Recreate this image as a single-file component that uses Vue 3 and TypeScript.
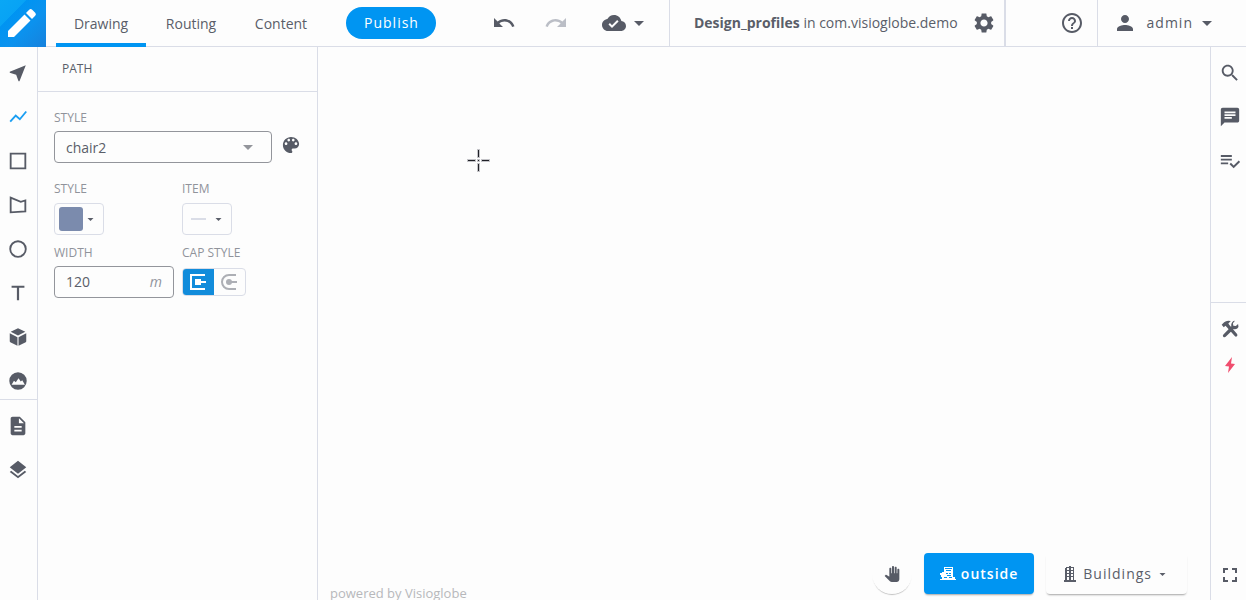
<script setup lang="ts">
import { ref } from 'vue'

interface Tool {
  name: string
  fill?: string
  stroke?: string
}

const tabs = ['Drawing', 'Routing', 'Content']
const activeTab = ref('Drawing')
const activeTool = ref('Path')
const profile = ref('chair2')
const width = ref('120')
const cap = ref<'square' | 'round'>('square')

const drawTools: Tool[] = [
  { name: 'Select', fill: 'M20.5 3.5L3 10.6v1l7 2.4 2.6 7h1z' },
  { name: 'Path', stroke: 'M3.5 17L9.5 10.5l4.5 4L21 6' },
  { name: 'Rectangle', stroke: 'M4 4h16v16H4z' },
  { name: 'Polygon', stroke: 'M4 4l11 4.5 5-1.5v12L4 20z' },
  { name: 'Circle', stroke: 'M12 3.5a8.5 8.5 0 1 0 0 17a8.5 8.5 0 1 0 0-17z' },
  { name: 'Text', fill: 'M5 4v2.4h5.8V20h2.4V6.4H19V4z' },
  { name: 'Volume', fill: 'M12 2.5L20 6.4l-8 4-8-4zM3 8l8.4 4.2v9.3L3.6 17.6Q3 17.3 3 16.6zM21 8l-8.4 4.2v9.3l7.8-3.9q.6-.3.6-1z' },
  { name: 'Image', fill: 'M12 2.5a9.5 9.5 0 1 0 0 19a9.5 9.5 0 1 0 0-19zM5 16l2.6-4.2 2 1.6 3-4.4 2.4 3.6 1.6-1.4L19.5 16z' },
]

const dataTools: Tool[] = [
  { name: 'Documents', fill: 'M14 2H6c-1.1 0-2 .9-2 2v16c0 1.1.9 2 2 2h12c1.1 0 2-.9 2-2V8l-6-6zm2 16H8v-2h8v2zm0-4H8v-2h8v2zm-3-5V3.5L18.5 9H13z' },
  { name: 'Layers', fill: 'M11.99 18.54l-7.37-5.73L3 14.07l9 7 9-7-1.63-1.27-7.38 5.74zM12 16l7.36-5.73L21 9l-9-7-9 7 1.63 1.27L12 16z' },
]

const sideTools: Tool[] = [
  { name: 'Search', fill: 'M15.5 14h-.79l-.28-.27C15.41 12.59 16 11.11 16 9.5 16 5.91 13.09 3 9.5 3S3 5.91 3 9.5 5.91 16 9.5 16c1.61 0 3.09-.59 4.23-1.57l.27.28v.79l5 4.99L20.49 19l-4.99-5zm-6 0C7.01 14 5 11.99 5 9.5S7.01 5 9.5 5 14 7.01 14 9.5 11.99 14 9.5 14z' },
  { name: 'Comments', fill: 'M20 2H4c-1.1 0-2 .9-2 2v18l4-4h14c1.1 0 2-.9 2-2V4c0-1.1-.9-2-2-2zM6 9h12v2H6V9zm8 5H6v-2h8v2zm4-6H6V6h12v2z' },
  { name: 'Checks', fill: 'M14 9.5H2v2h12v-2zm0-4H2v2h12v-2zM2 15.5h8v-2H2v2zm19.5-4L23 13l-6.99 7-4.51-4.5L13 14l3.01 3 5.49-5.5z' },
]

const icons = {
  undo: 'M12.5 8c-2.65 0-5.05.99-6.9 2.6L2 7v9h9l-3.62-3.62c1.39-1.16 3.16-1.88 5.12-1.88 3.54 0 6.55 2.31 7.6 5.5l2.37-.78C21.08 11.03 17.15 8 12.5 8z',
  cloud: 'M19.35 10.04C18.67 6.59 15.64 4 12 4 9.11 4 6.6 5.64 5.35 8.04 2.34 8.36 0 10.91 0 14c0 3.31 2.69 6 6 6h13c2.76 0 5-2.24 5-5 0-2.64-2.05-4.78-4.65-4.96zM10 17l-3.5-3.5 1.41-1.41L10 14.17 15.18 9l1.41 1.41L10 17z',
  gear: 'M19.14 12.94c.04-.3.06-.61.06-.94 0-.32-.02-.64-.07-.94l2.03-1.58c.18-.14.23-.41.12-.61l-1.92-3.32c-.12-.22-.37-.29-.59-.22l-2.39.96c-.5-.38-1.03-.7-1.62-.94l-.36-2.54c-.04-.24-.24-.41-.48-.41h-3.84c-.24 0-.43.17-.47.41l-.36 2.54c-.59.24-1.13.57-1.62.94l-2.39-.96c-.22-.08-.47 0-.59.22L2.74 8.87c-.12.21-.08.47.12.61l2.03 1.58c-.05.3-.09.63-.09.94s.02.64.07.94l-2.03 1.58c-.18.14-.23.41-.12.61l1.92 3.32c.12.22.37.29.59.22l2.39-.96c.5.38 1.03.7 1.62.94l.36 2.54c.05.24.24.41.48.41h3.84c.24 0 .44-.17.47-.41l.36-2.54c.59-.24 1.13-.56 1.62-.94l2.39.96c.22.08.47 0 .59-.22l1.92-3.32c.12-.22.07-.47-.12-.61l-2.01-1.58zM12 15.6c-1.98 0-3.6-1.62-3.6-3.6s1.62-3.6 3.6-3.6 3.6 1.62 3.6 3.6-1.62 3.6-3.6 3.6z',
  help: 'M11 18h2v-2h-2v2zm1-16C6.48 2 2 6.48 2 12s4.48 10 10 10 10-4.48 10-10S17.52 2 12 2zm0 18c-4.41 0-8-3.59-8-8s3.59-8 8-8 8 3.59 8 8-3.59 8-8 8zm0-14c-2.21 0-4 1.79-4 4h2c0-1.1.9-2 2-2s2 .9 2 2c0 2-3 1.75-3 5h2c0-2.25 3-2.5 3-5 0-2.21-1.79-4-4-4z',
  person: 'M12 12c2.21 0 4-1.79 4-4s-1.79-4-4-4-4 1.79-4 4 1.79 4 4 4zm0 2c-2.67 0-8 1.34-8 4v2h16v-2c0-2.66-5.33-4-8-4z',
  palette: 'M12 3c-4.97 0-9 4.03-9 9s4.03 9 9 9c.83 0 1.5-.67 1.5-1.5 0-.39-.15-.74-.39-1.01-.23-.26-.38-.61-.38-.99 0-.83.67-1.5 1.5-1.5H16c2.76 0 5-2.24 5-5 0-4.42-4.03-8-9-8zm-5.5 9c-.83 0-1.5-.67-1.5-1.5S5.67 9 6.5 9 8 9.67 8 10.5 7.33 12 6.5 12zm3-4C8.67 8 8 7.33 8 6.5S8.67 5 9.5 5s1.5.67 1.5 1.5S10.33 8 9.5 8zm5 0c-.83 0-1.5-.67-1.5-1.5S13.67 5 14.5 5s1.5.67 1.5 1.5S15.33 8 14.5 8zm3 4c-.83 0-1.5-.67-1.5-1.5S16.67 9 17.5 9s1.5.67 1.5 1.5-.67 1.5-1.5 1.5z',
  hand: 'M23 5.5V20c0 2.2-1.8 4-4 4h-7.3c-1.08 0-2.1-.43-2.85-1.19L1 14.83s1.26-1.23 1.3-1.25c.22-.19.49-.29.79-.29.22 0 .42.06.6.16.04.01 4.31 2.46 4.31 2.46V4c0-.83.67-1.5 1.5-1.5S11 3.17 11 4v7h1V1.5c0-.83.67-1.5 1.5-1.5S15 .67 15 1.5V11h1V2.5c0-.83.67-1.5 1.5-1.5s1.5.67 1.5 1.5V11h1V5.5c0-.83.67-1.5 1.5-1.5s1.5.67 1.5 1.5z',
  fullscreen: 'M7 14H5v5h5v-2H7v-3zm-2-4h2V7h3V5H5v5zm12 7h-3v2h5v-5h-2v3zM14 5v2h3v3h2V5h-5z',
}
</script>

<template>
  <div class="app">
    <header class="topbar">
      <a class="logo" href="#" aria-label="Home">
        <svg viewBox="0 0 46 47">
          <defs>
            <linearGradient id="logo-shade" x1="0" y1="0" x2="1" y2="1">
              <stop offset="0" stop-color="#0aa7f5" />
              <stop offset="0.28" stop-color="#08a3f5" />
              <stop offset="0.29" stop-color="#0094f2" />
              <stop offset="0.6" stop-color="#0c92ee" />
              <stop offset="1" stop-color="#1681dc" />
            </linearGradient>
          </defs>
          <path fill="url(#logo-shade)" d="M0 0h46v47H0z" />
          <path fill="#fff" d="M8 37v-6L24.5 14.5l6 6L14 37zM26 13l3.2-3.2q1.500-1.500 3 0l3 3q1.500 1.500 0 3L32 19z" />
        </svg>
      </a>
      <nav class="tabs">
        <a v-for="t in tabs" :key="t" href="#" class="tab" :class="{ active: t === activeTab }" @click.prevent="activeTab = t">{{ t }}</a>
      </nav>
      <button type="button" class="publish">Publish</button>
      <div class="history">
        <button type="button" class="plain" aria-label="Undo"><svg class="i24" viewBox="0 0 24 24"><path :d="icons.undo" /></svg></button>
        <button type="button" class="plain" aria-label="Redo" disabled><svg class="i24 mirrored" viewBox="0 0 24 24"><path :d="icons.undo" /></svg></button>
        <button type="button" class="plain save" aria-label="Saved">
          <svg class="i24" viewBox="0 0 24 24"><path :d="icons.cloud" /></svg>
          <svg class="caret" viewBox="0 0 10 5"><path d="M0 0h10L5 5z" /></svg>
        </button>
      </div>
      <div class="project">
        <span><b>Design_profiles</b> in com.visioglobe.demo</span>
        <button type="button" class="plain" aria-label="Project settings"><svg class="i24" viewBox="0 0 24 24"><path :d="icons.gear" /></svg></button>
      </div>
      <div class="help">
        <button type="button" class="plain" aria-label="Help"><svg class="i24" viewBox="0 0 24 24"><path :d="icons.help" /></svg></button>
      </div>
      <button type="button" class="plain account">
        <svg class="i24" viewBox="0 0 24 24"><path :d="icons.person" /></svg>
        <span>admin</span>
        <svg class="caret" viewBox="0 0 10 5"><path d="M0 0h10L5 5z" /></svg>
      </button>
    </header>

    <div class="workspace">
      <aside class="toolbar">
        <div class="group">
          <button v-for="t in drawTools" :key="t.name" type="button" class="tool" :class="{ active: t.name === activeTool }" :aria-label="t.name" @click="activeTool = t.name">
            <svg class="i22" viewBox="0 0 24 24">
              <path v-if="t.fill" fill-rule="evenodd" :d="t.fill" />
              <path v-else class="line" :d="t.stroke" />
            </svg>
          </button>
        </div>
        <div class="group">
          <button v-for="t in dataTools" :key="t.name" type="button" class="tool" :aria-label="t.name">
            <svg class="i22" viewBox="0 0 24 24"><path :d="t.fill" /></svg>
          </button>
        </div>
      </aside>

      <section class="panel">
        <h2>PATH</h2>
        <form class="fields" @submit.prevent>
          <div class="field">
            <label for="profile">STYLE</label>
            <div class="profile-row">
              <div class="select-box">
                <select id="profile" v-model="profile"><option>chair2</option></select>
                <svg class="caret" viewBox="0 0 10 5"><path d="M0 0h10L5 5z" /></svg>
              </div>
              <button type="button" class="plain palette" aria-label="Edit styles"><svg class="i18" viewBox="2 2 20 20"><path :d="icons.palette" /></svg></button>
            </div>
          </div>
          <div class="grid">
            <div class="field">
              <label for="color">STYLE</label>
              <button id="color" type="button" class="picker">
                <span class="swatch"></span>
                <svg class="small-caret" viewBox="0 0 8 4"><path d="M0 0h8L4 4z" /></svg>
              </button>
            </div>
            <div class="field">
              <label for="item">ITEM</label>
              <button id="item" type="button" class="picker">
                <span class="dash"></span>
                <svg class="small-caret" viewBox="0 0 8 4"><path d="M0 0h8L4 4z" /></svg>
              </button>
            </div>
            <div class="field">
              <label for="width">WIDTH</label>
              <div class="measure"><input id="width" v-model="width" type="text" /><i>m</i></div>
            </div>
            <div class="field">
              <span id="cap-label" class="label">CAP STYLE</span>
              <div class="segments" role="group" aria-labelledby="cap-label">
                <button type="button" aria-label="Square" :aria-pressed="cap === 'square'" @click="cap = 'square'">
                  <svg class="i18" viewBox="0 0 18 18"><path class="line" d="M16 2H2v14h14M10 9h7" /><path d="M6 6h6v6H6z" /></svg>
                </button>
                <button type="button" aria-label="Round" :aria-pressed="cap === 'round'" @click="cap = 'round'">
                  <svg class="i18" viewBox="0 0 18 18"><path class="line" d="M16 2H9a7 7 0 0 0 0 14h7M10 9h7" /><circle cx="9" cy="9" r="3" /></svg>
                </button>
              </div>
            </div>
          </div>
        </form>
      </section>

      <main class="canvas">
        <svg class="cursor" viewBox="0 0 23 23">
          <path stroke="#c4c4c8" stroke-width="3" d="M11.5 0v9M11.5 14v9M0 11.5h9M14 11.5h9M10 11.5h3" />
          <path stroke="#202127" stroke-width="1" d="M11.5 1v7M11.5 15v7M1 11.5h7M15 11.5h7M11 11.5h1" />
        </svg>
        <small class="credit">powered by Visioglobe</small>
        <div class="floor-bar">
          <button type="button" class="pan" aria-label="Pan"><svg class="i16" viewBox="0 0 24 24"><path :d="icons.hand" /></svg></button>
          <button type="button" class="place outside">
            <svg class="i16" viewBox="0 0 16 16">
              <path fill-rule="evenodd" d="M4 1h9v10h2v2h1v1H0v-1h2v-2H1V9H0V7h2V6h2zM5 2v1h7V2zM6 4v1h5V4zM6 7v1h2V7zM9 7v1h2V7zM7 9v1h4V9zM4 11v1h3v-1zM9 11v1h3v-1z" />
            </svg>
            <span>outside</span>
          </button>
          <button type="button" class="place buildings">
            <svg class="building" viewBox="0 0 12 16">
              <path fill-rule="evenodd" d="M5 0h2v1h3v13h2v2H0v-2h1V2h1V1h3zM3 2v2h2V2zM7 2v2h2V2zM3 5v2h2V5zM7 5v2h2V5zM3 8v2h2V8zM7 8v2h2V8zM3 11v3h2v-3zM7 11v3h2v-3z" />
            </svg>
            <span>Buildings</span>
            <svg class="small-caret" viewBox="0 0 8 4"><path d="M0 0h8L4 4z" /></svg>
          </button>
        </div>
      </main>

      <aside class="sidebar">
        <div class="group upper">
          <button v-for="t in sideTools" :key="t.name" type="button" class="tool" :aria-label="t.name">
            <svg class="i22" viewBox="0 0 24 24"><path :d="t.fill" /></svg>
          </button>
        </div>
        <div class="group lower">
          <button type="button" class="tool" aria-label="Tools">
            <svg class="i20" viewBox="0 0 24 24">
              <path d="M2 7l3-3q3-3 8-1.500L10 5.500 11 7l9.500 11q1 1.500-.2 2.700-1.300 1-2.600-.2L8 9.500 6.500 8 4.500 10z" />
              <path d="M18 2l-2.500 3 .5 3 3 .5 2.700-2.500q1.300 3.500-1 5.300-2 1.400-4.200.7l-9.700 9.400q-1.500 1.200-2.900-.1-1.200-1.300.2-2.800L13.500 9Q13 5.500 14.800 3.500 16 2 18 2z" />
            </svg>
          </button>
          <button type="button" class="tool alert" aria-label="Errors">
            <svg class="i18" viewBox="0 0 18 18"><path d="M11 1L4 10l4 .5L7 17l7-9-4-.5z" /></svg>
          </button>
        </div>
        <button type="button" class="tool expand" aria-label="Full screen"><svg class="i24" viewBox="0 0 24 24"><path :d="icons.fullscreen" /></svg></button>
      </aside>
    </div>
  </div>
</template>

<style>
body {
  margin: 0;
  background: #fdfdfd;
}
</style>

<style scoped>
* {
  box-sizing: border-box;
}
.app {
  display: flex;
  flex-direction: column;
  height: 100vh;
  overflow: hidden;
  background: #fdfdfd;
  color: #5a5e69;
  font: 14px/20px "Open Sans", "Noto Sans", sans-serif;
}
button,
input,
select {
  font: inherit;
  color: inherit;
  margin: 0;
  padding: 0;
}
button {
  border: 0;
  background: none;
  cursor: pointer;
}
svg {
  display: block;
  flex: none;
  fill: currentColor;
}
.line {
  fill: none;
  stroke: currentColor;
  stroke-width: 2;
}
.i24 { width: 24px; height: 24px; }
.i22 { width: 22px; height: 22px; }
.i20 { width: 20px; height: 20px; }
.i18 { width: 18px; height: 18px; }
.i16 { width: 16px; height: 16px; }
.caret { width: 10px; height: 5px; }
.small-caret { width: 7px; height: 3px; }
.mirrored { transform: scaleX(-1); }

.topbar {
  display: flex;
  flex: none;
  align-items: stretch;
  height: 47px;
  border-bottom: 1px solid #dadde7;
}
.logo {
  width: 46px;
  height: 47px;
}
.tabs {
  display: flex;
  margin-left: 10px;
}
.tab {
  display: flex;
  align-items: center;
  justify-content: center;
  width: 90px;
  height: 47px;
  border-top: 4px solid transparent;
  border-bottom: 4px solid transparent;
  color: inherit;
  text-decoration: none;
}
.tab.active {
  border-bottom-color: #0095f2;
}
.publish {
  align-self: center;
  width: 90px;
  height: 32px;
  margin-left: 20px;
  padding-left: 1px;
  border-radius: 16px;
  background: #0095f2;
  color: #fff;
  font-weight: 500;
  letter-spacing: 1px;
}
.history {
  display: flex;
  flex: 1;
  align-items: center;
  gap: 28px;
  padding-left: 56px;
}
.plain {
  display: flex;
  align-items: center;
  color: #575b66;
}
.plain:disabled {
  color: #bbbec6;
}
.save {
  gap: 8px;
  margin-left: 6px;
}
.project {
  display: flex;
  align-items: center;
  gap: 14px;
  padding: 0 8px 0 24px;
  border-left: 1px solid #dadde7;
  border-right: 2px solid #dadde7;
  white-space: nowrap;
}
.help {
  display: flex;
  align-items: center;
  padding: 0 13px 0 54px;
}
.account {
  gap: 10px;
  padding: 0 34px 0 15px;
  border-left: 1px solid #dadde7;
  letter-spacing: 1px;
}
.account .caret {
  margin-left: -1px;
}

.workspace {
  display: flex;
  flex: 1;
  min-height: 0;
}
.toolbar {
  flex: none;
  width: 38px;
  border-right: 1px solid #dadde7;
}
.group {
  display: flex;
  flex-direction: column;
  gap: 8px;
  padding-top: 8px;
}
.group + .group {
  border-top: 1px solid #dadde7;
}
.tool {
  display: flex;
  align-items: center;
  justify-content: center;
  height: 36px;
  color: #575b66;
}
.toolbar .tool {
  width: 36px;
}
.tool.active {
  color: #1a9ef2;
}
.panel {
  flex: none;
  width: 280px;
  border-right: 1px solid #dadde7;
}
h2 {
  margin: 0;
  padding: 12px 24px;
  border-bottom: 1px solid #dadde7;
  font-size: 12px;
  line-height: 20px;
  font-weight: 400;
}
.fields {
  display: flex;
  flex-direction: column;
  gap: 16px;
  padding: 16px;
}
label,
.label {
  display: block;
  height: 20px;
  margin-bottom: 3px;
  color: #90939b;
  font-size: 12px;
}
.profile-row {
  display: flex;
  gap: 10px;
  align-items: center;
}
.palette {
  margin-bottom: 4px;
}
.select-box {
  display: grid;
  flex: none;
  width: 218px;
  align-items: center;
}
.select-box > * {
  grid-area: 1 / 1;
}
.select-box select {
  height: 32px;
  padding: 1px 11px 0;
  border: 1px solid #93959b;
  border-radius: 4px;
  background: none;
  appearance: none;
}
.select-box svg {
  justify-self: end;
  margin-right: 19px;
  color: #93959b;
  pointer-events: none;
}
.grid {
  display: grid;
  grid-template-columns: 120px 1fr;
  gap: 8px;
}
.picker {
  display: flex;
  align-items: center;
  gap: 4px;
  width: 50px;
  height: 32px;
  margin-top: 4px;
  padding: 0 4px;
  border: 1px solid #dadde7;
  border-radius: 4px;
}
.swatch {
  width: 24px;
  height: 24px;
  border-radius: 3px;
  background: #7b8bad;
}
.dash {
  width: 15px;
  height: 2px;
  margin: 0 5px 0 4px;
  background: #dadde7;
}
.measure {
  display: flex;
  align-items: center;
  height: 32px;
  padding: 0 11px;
  border: 1px solid #93959b;
  border-radius: 4px;
}
.measure input {
  flex: 1;
  min-width: 0;
  border: 0;
  background: none;
}
.measure i {
  color: #90939b;
}
.segments {
  display: flex;
  width: 64px;
  height: 28px;
  margin-top: 5px;
  border: 1px solid #dadde7;
  border-radius: 4px;
  overflow: hidden;
}
.segments button {
  display: flex;
  flex: 1;
  align-items: center;
  justify-content: center;
  padding-right: 2px;
  color: #adafb5;
}
.segments button[aria-pressed="true"] {
  background: #128cdb;
  color: #fff;
}

.canvas {
  position: relative;
  flex: 1;
  min-width: 0;
}
.cursor {
  position: absolute;
  left: 149px;
  top: 102px;
  width: 23px;
  height: 23px;
}
.credit {
  position: absolute;
  left: 12px;
  bottom: 0;
  color: #b7b8bb;
  font-size: 13px;
  line-height: 14px;
}
.floor-bar {
  position: absolute;
  right: 23px;
  bottom: 6px;
  display: flex;
  align-items: center;
  gap: 12px;
}
.pan {
  display: flex;
  align-items: center;
  justify-content: center;
  width: 40px;
  height: 40px;
  border-radius: 50%;
  color: #575b66;
  box-shadow: 0 2px 1px -1px #c0c0c0;
}
.place {
  display: flex;
  align-items: center;
  justify-content: center;
  height: 41px;
  padding-top: 1px;
  border-radius: 4px;
  letter-spacing: 1px;
  box-shadow: 0 2px 2px -1px #a4a4a4;
}
.outside {
  gap: 5px;
  padding-left: 16px;
  padding-right: 16px;
  background: #0095f2;
  color: #fff;
  font-weight: 600;
}
.buildings {
  gap: 7px;
  padding-left: 18px;
  padding-right: 21px;
}
.building {
  width: 12px;
  height: 16px;
}

.sidebar {
  display: flex;
  flex: none;
  flex-direction: column;
  width: 36px;
  border-left: 1px solid #dadde7;
}
.upper {
  height: 255px;
}
.lower {
  gap: 0;
}
.sidebar .tool {
  width: 38px;
}
.alert {
  color: #f04e6e;
}
.expand {
  margin-top: auto;
  margin-bottom: 7px;
}
</style>
